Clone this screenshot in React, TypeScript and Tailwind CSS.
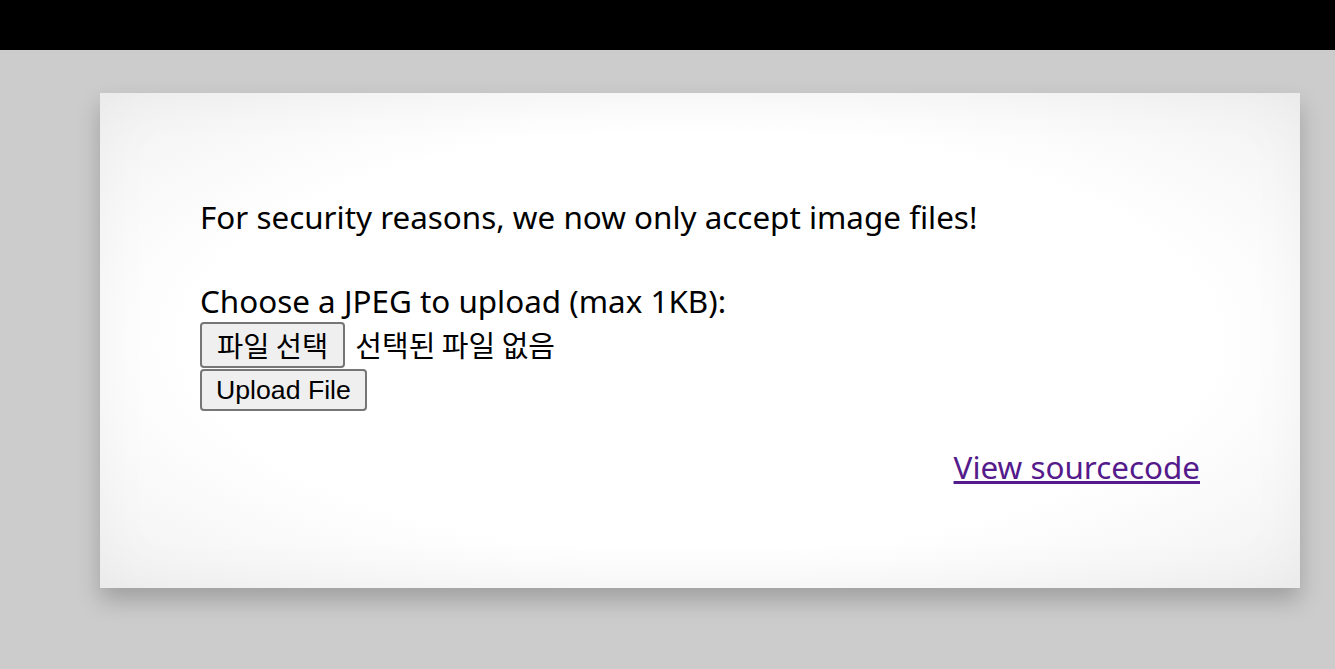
import React from "react";

export default function App() {
  const body = { fontFamily: '"Noto Sans", "Noto Sans CJK KR", sans-serif' };
  const btn = { fontFamily: '"Liberation Sans", Arial, "Noto Sans CJK KR", sans-serif' };
  const kr = { fontFamily: '"Noto Sans CJK KR", sans-serif' };
  return (
    <div className="min-h-[669px] w-full bg-[#cccccc]" style={body}>
      <div className="h-[50px] w-full bg-black" />
      <div className="pl-[100px] pt-[43px]">
        <div className="w-[1200px] h-[495px] bg-white bg-[radial-gradient(ellipse_at_center,#ffffff_60%,#f1f1f1_100%)] shadow-[inset_0_0_60px_rgba(0,0,0,0.04),0_12px_22px_rgba(0,0,0,0.22)] px-[100px] pt-[102px] text-[31.4px] text-black">
          <div className="h-[43px] leading-[43px]">For security reasons, we now only accept image files!</div>
          <div className="h-[43px]" />
          <div className="h-[40px] leading-[40px]">Choose a JPEG to upload (max 1KB):</div>
          <div className="flex items-center h-[48px]">
            <div
              className="h-[46px] px-[15px] flex items-center border-2 border-[#767676] rounded-[4px] bg-[#efefef] text-[28.5px] text-black"
              style={kr}
            >
              파일 선택
            </div>
            <span className="ml-[10px] text-[29px]" style={kr}>
              선택된 파일 없음
            </span>
          </div>
          <div className="flex h-[44px] items-start">
            <div
              className="h-[42px] px-[14px] flex items-center border-2 border-[#767676] rounded-[4px] bg-[#efefef] text-[26.67px] text-black"
              style={btn}
            >
              Upload File
            </div>
          </div>
          <div className="flex justify-end mt-[32px]">
            <a href="#" className="text-[#551a8b] underline leading-[43px]">
              View sourcecode
            </a>
          </div>
        </div>
      </div>
    </div>
  );
}
